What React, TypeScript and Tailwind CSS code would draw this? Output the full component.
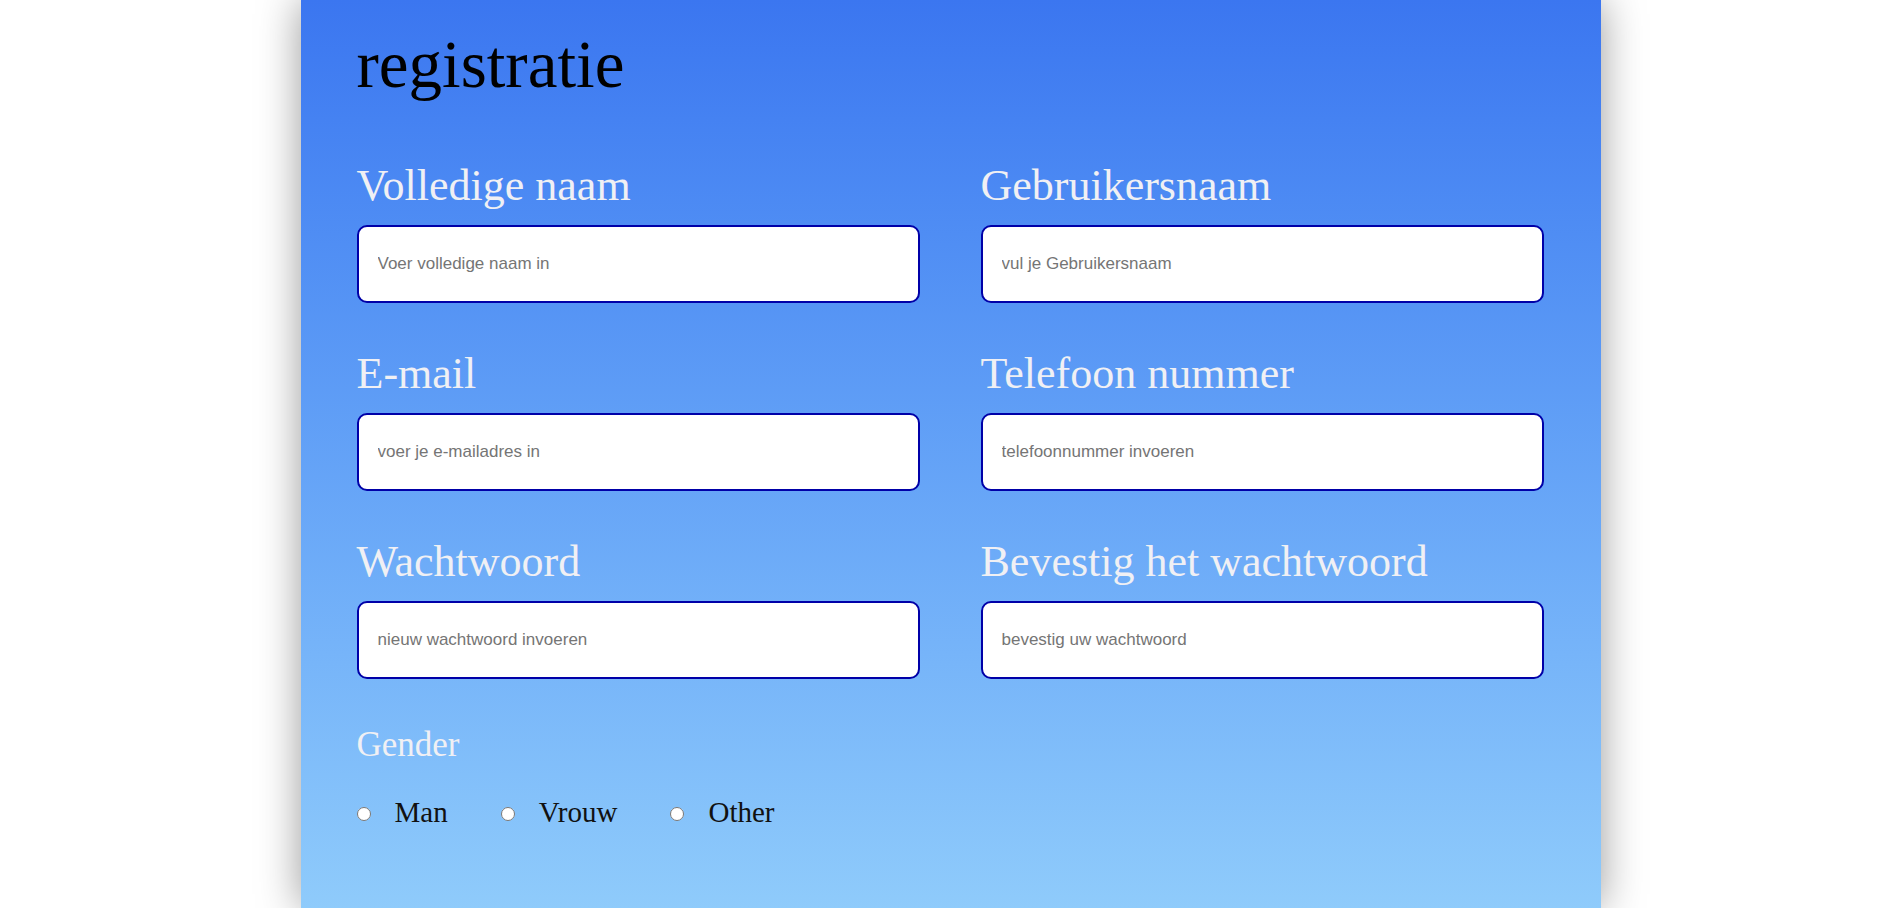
import { useState } from "react";

interface Field {
  label: string;
  name: string;
  type: string;
  placeholder: string;
}

const fields: Field[] = [
  { label: "Volledige naam", name: "fullName", type: "text", placeholder: "Voer volledige naam in" },
  { label: "Gebruikersnaam", name: "username", type: "text", placeholder: "vul je Gebruikersnaam" },
  { label: "E-mail", name: "email", type: "email", placeholder: "voer je e-mailadres in" },
  { label: "Telefoon nummer", name: "phone", type: "tel", placeholder: "telefoonnummer invoeren" },
  { label: "Wachtwoord", name: "password", type: "password", placeholder: "nieuw wachtwoord invoeren" },
  { label: "Bevestig het wachtwoord", name: "confirm", type: "password", placeholder: "bevestig uw wachtwoord" },
];

const genders = ["Man", "Vrouw", "Other"];

const App = () => {
  const [form, setForm] = useState<Record<string, string>>({});
  const [gender, setGender] = useState("");

  const handleChange = (field: string, value: string) => {
    setForm({ ...form, [field]: value });
  };

  return (
    <div className="min-h-screen bg-white font-['Liberation_Serif',serif]">
      <div className="w-[1300px] min-h-screen mx-auto bg-gradient-to-b from-[#3b76f0] to-[#8fcbfb] shadow-[0_0_40px_rgba(0,0,0,0.4)] px-[56px] pt-[31px] pb-16">
        <h1 className="text-[67px] leading-none text-black">registratie</h1>

        <form className="mt-[66px]" onSubmit={(e) => e.preventDefault()}>
          <div className="grid grid-cols-[563px_563px] gap-x-[61px] gap-y-[49px]">
            {fields.map((f) => (
              <div key={f.name} className="flex flex-col">
                <label className="text-[44px] leading-none text-[#f0f0f4]">{f.label}</label>
                <input
                  type={f.type}
                  value={form[f.name] || ""}
                  onChange={(e) => handleChange(f.name, e.target.value)}
                  placeholder={f.placeholder}
                  className="mt-[17px] h-[78px] w-full rounded-[10px] border-2 border-[#0000a8] bg-white px-[19px] font-['Liberation_Sans',Arial,sans-serif] text-[17px] text-black outline-none placeholder:text-[#757575]"
                />
              </div>
            ))}
          </div>

          <div className="mt-[48px] text-[35px] leading-none text-[#f0f0f4]">Gender</div>

          <div className="mt-[36px] flex items-center gap-[53px]">
            {genders.map((g) => (
              <label key={g} className="flex items-center gap-[24px] text-[29px] leading-none text-[#111]">
                <input
                  type="radio"
                  name="gender"
                  checked={gender === g}
                  onChange={() => setGender(g)}
                  className="mt-[3px] h-[14px] w-[14px]"
                />
                {g}
              </label>
            ))}
          </div>
        </form>
      </div>
    </div>
  );
};

export default App;
